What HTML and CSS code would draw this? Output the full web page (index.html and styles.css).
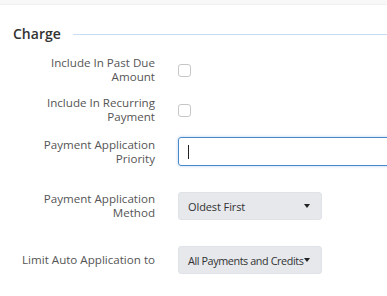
FILE: index.html
```html
<!DOCTYPE html>
<html>
<head>
<meta charset="utf-8">
<link rel="stylesheet" href="styles.css">
</head>
<body>
<div class="topbar"></div>
<div class="section">
  <div class="heading">
    <span class="heading-text">Charge</span>
    <span class="heading-line"></span>
  </div>
  <div class="row r1">
    <div class="label">Include In Past Due<br>Amount</div>
    <div class="control"><span class="checkbox"></span></div>
  </div>
  <div class="row r2">
    <div class="label">Include In Recurring<br>Payment</div>
    <div class="control"><span class="checkbox"></span></div>
  </div>
  <div class="row r3">
    <div class="label">Payment Application<br>Priority</div>
    <div class="control"><div class="input"><span class="caret"></span></div></div>
  </div>
  <div class="row r4">
    <div class="label">Payment Application<br>Method</div>
    <div class="control"><div class="select"><span class="select-text">Oldest First</span><span class="arrow"></span></div></div>
  </div>
  <div class="row r5">
    <div class="label">Limit Auto Application to</div>
    <div class="control"><div class="select"><span class="select-text tight">All Payments and Credits</span><span class="arrow"></span></div></div>
  </div>
</div>
</body>
</html>
```
FILE: styles.css
```css
html, body {
  margin: 0;
  padding: 0;
  background: #fff;
  overflow: hidden;
}
body {
  font-family: "Open Sans", "Noto Sans", sans-serif;
  color: #555;
  width: 387px;
  height: 296px;
}
.topbar {
  height: 4px;
  background: #f8f8f8;
  border-bottom: 1px solid #f0f0f0;
}
.section {
  padding-left: 13px;
  overflow: hidden;
}
.heading {
  display: flex;
  align-items: center;
  margin-top: 21px;
  height: 16px;
}
.heading-text {
  font-size: 14px;
  font-weight: 600;
  color: #333;
  line-height: 16px;
}
.heading-line {
  flex: 1;
  height: 1px;
  background: #c9ddf2;
  margin-left: 12px;
}
.row {
  display: grid;
  grid-template-columns: 142px 1fr;
  column-gap: 23px;
  align-items: center;
  min-height: 28px;
}
.label {
  text-align: right;
  font-size: 11.6px;
  line-height: 14px;
  color: #555;
}
.r1 { margin-top: 14px; }
.r2 { margin-top: 12px; }
.r3 { margin-top: 13px; }
.r4 { margin-top: 26px; }
.r5 { margin-top: 26px; }
.control {
  display: flex;
  align-items: center;
}
.checkbox {
  width: 11px;
  height: 11px;
  border: 1px solid #c6c6c6;
  border-radius: 3px;
  background: #fff;
  margin-top: 1px;
}
.input {
  flex: none;
  width: 260px;
  height: 29px;
  box-sizing: border-box;
  border: 1px solid #4a89c8;
  border-radius: 3px;
  box-shadow: 0 0 3px rgba(102, 160, 230, 0.5);
  display: flex;
  align-items: center;
  padding-left: 9px;
}
.caret {
  width: 1px;
  height: 14px;
  background: #222;
}
.select {
  flex: none;
  width: 144px;
  height: 28px;
  box-sizing: border-box;
  background: #e6e8ec;
  border: 1px solid #dfe2e6;
  border-radius: 3px;
  display: flex;
  align-items: center;
  padding-left: 9px;
  position: relative;
}
.select-text {
  font-size: 11px;
  color: #333;
  white-space: nowrap;
  letter-spacing: -0.1px;
}
.select-text.tight {
  font-size: 10.8px;
  letter-spacing: -0.4px;
}
.arrow {
  position: absolute;
  right: 11px;
  top: 11px;
  width: 0;
  height: 0;
  border-left: 3px solid transparent;
  border-right: 3px solid transparent;
  border-top: 4px solid #222;
}
```
